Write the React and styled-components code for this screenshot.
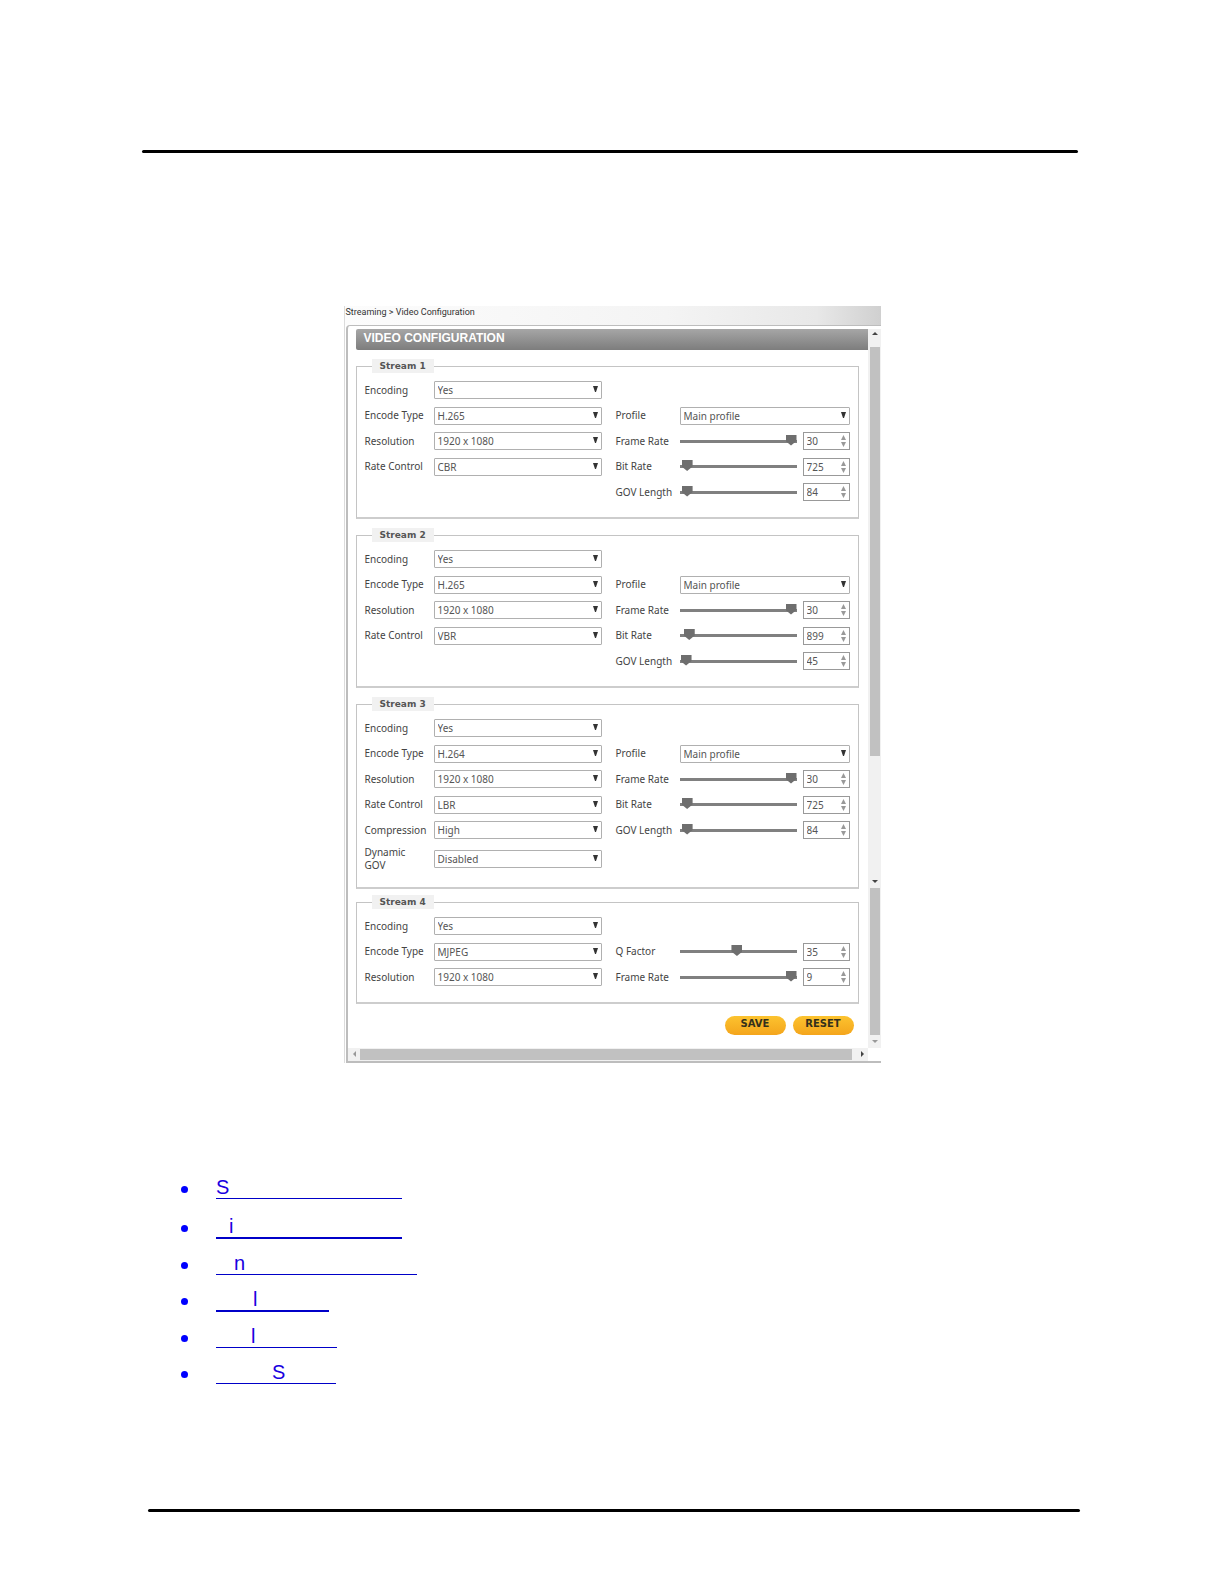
import React, { useId } from 'react';
import styled, { createGlobalStyle } from 'styled-components';

const GlobalStyle = createGlobalStyle`
  * {
    box-sizing: border-box;
  }

  body {
    margin: 0;
    background: #fff;
    font-family: 'Noto Sans', 'Open Sans', sans-serif;
    font-size: 10px;
    color: #444;
  }
`;

const Page = styled.div`
  padding: 150px 142px 72px;
`;

const TopRule = styled.hr`
  height: 3px;
  margin: 0 4px 153px 0;
  border: 0;
  border-radius: 2px;
  background: #000;
`;

const BottomRule = styled(TopRule)`
  margin: 125px 2px 0 6px;
`;

const Frame = styled.section`
  max-width: 537px;
  margin: 0 auto;
  border-left: 1px solid #dcdcdc;
`;

const Breadcrumb = styled.nav`
  height: 19px;
  padding-left: 1px;
  background: linear-gradient(to right, #fcfcfc 0%, #f4f4f4 60%, #e8e8e8 88%, #d0d0d0 100%);
  font: 9px/13px Roboto, sans-serif;
  color: #333;
`;

const Window = styled.div`
  border: solid #bdbdbd;
  border-width: 1px 0 2px 2px;
  border-top-left-radius: 4px;
  margin-left: 1px;
  background: #fff;
`;

const Body = styled.div`
  display: flex;
  padding-top: 3px;
`;

const Form = styled.form`
  flex: 1;
  min-width: 0;
  padding-left: 8px;
`;

const Title = styled.h1`
  height: 21px;
  margin: 0 0 9px;
  padding-left: 8px;
  border-radius: 2px 0 0 2px;
  background: linear-gradient(#a6a6a6, #7d7d7d);
  color: #fff;
  font: bold 12px/18px 'Liberation Sans', Arial, sans-serif;
`;

const Stream = styled.fieldset`
  display: grid;
  grid-template-columns: minmax(0, 237fr) minmax(0, 234fr);
  column-gap: 14px;
  margin: 0 9px ${props => (props.$tight ? 6 : 9)}px 0;
  padding: 4px 8px 12px;
  min-width: 0;
  border: 1px solid #c4c4c4;
  border-bottom: 2px solid #cdcdcd;
`;

const Legend = styled.legend`
  margin-left: 7px;
  padding: 0 8px;
  background: #f1f1f1;
  color: #555;
  font: bold 9px/14px 'DejaVu Sans', Verdana, sans-serif;
`;

const Fields = styled.div`
  display: grid;
  grid-template-columns: ${props => props.$label}px minmax(0, 1fr);
  grid-auto-rows: minmax(26px, auto) minmax(25px, auto);
  align-content: start;
  align-items: center;
`;

const Label = styled.label`
  padding: 3px 6px 3px 0;
  line-height: 13px;
  white-space: ${props => (props.$wrap ? 'normal' : 'nowrap')};
  color: #444;
`;

const Spacer = styled.div`
  grid-column: 1 / -1;
`;

const Control = styled.div`
  position: relative;
  display: flex;
  flex: ${props => (props.$width ? `0 0 ${props.$width}px` : '1')};
  min-width: 0;
`;

const SelectBox = styled.select`
  width: 100%;
  height: 18px;
  padding: 0 3px;
  appearance: none;
  border: 1px solid #b0b0b0;
  border-radius: 1px;
  background: #fff;
  color: #555;
  font: inherit;
`;

const NumberBox = styled.input`
  width: 100%;
  height: 18px;
  padding: 0 3px;
  appearance: textfield;
  border: 1px solid #999;
  border-radius: 0;
  background: #fff;
  color: #555;
  font: inherit;

  &::-webkit-inner-spin-button {
    display: none;
  }
`;

const Arrows = styled.svg`
  position: absolute;
  top: 3px;
  right: 4px;
  pointer-events: none;
`;

const SliderRow = styled.div`
  display: flex;
  align-items: center;
  gap: 6px;
`;

const Slider = styled.input`
  flex: 1;
  min-width: 0;
  height: 14px;
  margin: 0;
  appearance: none;
  background: none;

  &::-webkit-slider-runnable-track {
    height: 3px;
    background: #808080;
  }

  &::-webkit-slider-thumb {
    appearance: none;
    width: 11px;
    height: 11px;
    margin-top: -5px;
    background: #6e6e6e;
    clip-path: polygon(0 0, 100% 0, 100% 60%, 50% 100%, 0 60%);
  }
`;

const Actions = styled.div`
  display: flex;
  justify-content: flex-end;
  gap: 7px;
  padding: 3px 14px 13px 0;
`;

const Button = styled.button`
  width: 61px;
  height: 19px;
  padding: 0 0 3px;
  border: 0;
  border-radius: 10px;
  background: linear-gradient(#fcc32f, #f4a51c);
  color: #33301c;
  font: bold 10px/16px 'DejaVu Sans', Verdana, sans-serif;
`;

const ScrollColumn = styled.div`
  display: flex;
  flex-direction: column;
  width: 13px;
  padding: 0 1px 0 2px;
  background: #f1f1f1;
`;

const ScrollRow = styled.div`
  display: flex;
  height: 13px;
  margin-right: 13px;
  padding: 1px 0;
  background: #f1f1f1;
`;

const Thumb = styled.div`
  flex: ${props => props.$size};
  background: #c1c1c1;
`;

const Track = styled.div`
  flex: ${props => props.$size};
`;

const ArrowEnd = styled.svg`
  flex: none;
`;

const Links = styled.ul`
  display: flex;
  flex-direction: column;
  gap: 13px;
  margin: 113px 0 0;
  padding: 0 0 0 39px;
  list-style: none;
`;

const LinkItem = styled.li`
  display: flex;
  align-items: center;
  gap: 28px;

  &:first-child {
    margin-bottom: 3px;
  }

  &::before {
    content: '';
    width: 7px;
    height: 7px;
    margin-top: 3px;
    border-radius: 50%;
    background: #00f;
  }
`;

const TopicLink = styled.a`
  width: ${props => props.$width}px;
  padding-left: ${props => props.$indent}px;
  border-bottom: ${props => (props.$thick ? 2 : 1)}px solid #0000c8;
  color: #1a00e0;
  font: 20px/22px 'Liberation Sans', Arial, sans-serif;
  text-decoration: none;
`;

const streams = [
  {
    name: 'Stream 1',
    left: [['Encoding', 'Yes'], ['Encode Type', 'H.265'], ['Resolution', '1920 x 1080'], ['Rate Control', 'CBR']],
    profile: 'Main profile',
    sliders: [['Frame Rate', 30, 100], ['Bit Rate', 725, 2], ['GOV Length', 84, 2]],
  },
  {
    name: 'Stream 2',
    left: [['Encoding', 'Yes'], ['Encode Type', 'H.265'], ['Resolution', '1920 x 1080'], ['Rate Control', 'VBR']],
    profile: 'Main profile',
    sliders: [['Frame Rate', 30, 100], ['Bit Rate', 899, 4], ['GOV Length', 45, 1]],
  },
  {
    name: 'Stream 3',
    left: [
      ['Encoding', 'Yes'],
      ['Encode Type', 'H.264'],
      ['Resolution', '1920 x 1080'],
      ['Rate Control', 'LBR'],
      ['Compression', 'High'],
      ['Dynamic GOV', 'Disabled'],
    ],
    profile: 'Main profile',
    sliders: [['Frame Rate', 30, 100], ['Bit Rate', 725, 2], ['GOV Length', 84, 2]],
    tight: true,
  },
  {
    name: 'Stream 4',
    left: [['Encoding', 'Yes'], ['Encode Type', 'MJPEG'], ['Resolution', '1920 x 1080']],
    sliders: [['Q Factor', 35, 49], ['Frame Rate', 9, 100]],
  },
];

const links = [
  { text: 'S', width: 186, indent: 0 },
  { text: 'i', width: 186, indent: 13, thick: true },
  { text: 'n', width: 201, indent: 18 },
  { text: 'l', width: 113, indent: 37, thick: true },
  { text: 'l', width: 121, indent: 35 },
  { text: 'S', width: 120, indent: 56 },
];

function SelectField({ label, value }) {
  const id = useId();
  return (
    <>
      <Label htmlFor={id} $wrap>{label}</Label>
      <Control>
        <SelectBox id={id} defaultValue={value}>
          <option>{value}</option>
        </SelectBox>
        <Arrows width="5" height="9" viewBox="0 0 5 9" fill="#333">
          <path d="M0 2h5L3 8H2z" />
        </Arrows>
      </Control>
    </>
  );
}

function SliderField({ label, value, position }) {
  const id = useId();
  return (
    <>
      <Label htmlFor={id}>{label}</Label>
      <SliderRow>
        <Slider type="range" min="0" max="100" defaultValue={position} aria-label={label + ' slider'} />
        <Control $width={47}>
          <NumberBox id={id} type="number" defaultValue={value} />
          <Arrows width="5" height="12" viewBox="0 0 5 12" fill="#999">
            <path d="M2.5 0L5 5H0zM0 7h5L2.5 12z" />
          </Arrows>
        </Control>
      </SliderRow>
    </>
  );
}

function ScrollArrow({ d, width = 10, height = 13, color = '#444' }) {
  return (
    <ArrowEnd width={width} height={height} viewBox={`0 0 ${width} ${height}`} fill={color}>
      <path d={d} />
    </ArrowEnd>
  );
}

export default function App() {
  return (
    <Page>
      <GlobalStyle />
      <TopRule />
      <Frame>
        <Breadcrumb>Streaming &gt; Video Configuration</Breadcrumb>
        <Window>
          <Body>
            <Form onSubmit={e => e.preventDefault()}>
              <Title>VIDEO CONFIGURATION</Title>
              {streams.map(stream => (
                <Stream key={stream.name} $tight={stream.tight}>
                  <Legend>{stream.name}</Legend>
                  <Fields $label={69}>
                    {stream.left.map(([label, value]) => (
                      <SelectField key={label} label={label} value={value} />
                    ))}
                  </Fields>
                  <Fields $label={64}>
                    <Spacer />
                    {stream.profile && <SelectField label="Profile" value={stream.profile} />}
                    {stream.sliders.map(([label, value, position]) => (
                      <SliderField key={label} label={label} value={value} position={position} />
                    ))}
                  </Fields>
                </Stream>
              ))}
              <Actions>
                <Button type="submit">SAVE</Button>
                <Button type="reset">RESET</Button>
              </Actions>
            </Form>
            <ScrollColumn>
              <ScrollArrow height={18} d="M2 6h6L5 3z" />
              <Thumb $size={410} />
              <Track $size={119} />
              <ScrollArrow d="M2 5h6L5 8z" />
              <Thumb $size={147} />
              <ScrollArrow d="M2 5h6L5 8z" color="#999" />
            </ScrollColumn>
          </Body>
          <ScrollRow>
            <ScrollArrow width={12} height={11} d="M8 2v6L5 5z" color="#999" />
            <Thumb $size={1} />
            <ScrollArrow width={16} height={11} d="M9 2v6l3-3z" />
          </ScrollRow>
        </Window>
      </Frame>
      <Links>
        {links.map((link, i) => (
          <LinkItem key={i}>
            <TopicLink href="#" $width={link.width} $indent={link.indent} $thick={link.thick}>
              {link.text}
            </TopicLink>
          </LinkItem>
        ))}
      </Links>
      <BottomRule />
    </Page>
  );
}
